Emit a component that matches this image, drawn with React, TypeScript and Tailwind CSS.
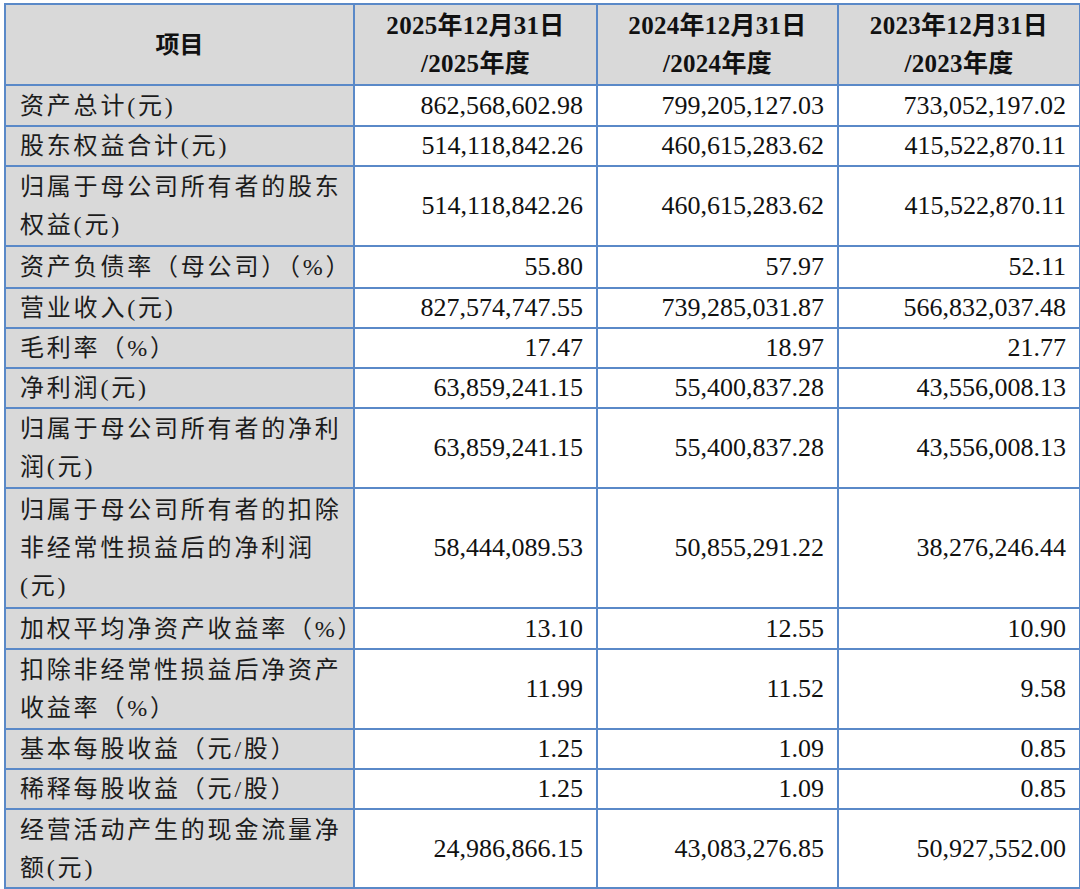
import React from 'react';

type Row = {
    label: string[];
    values: string[];
    h: string;
};

const rows: Row[] = [
    { label: ['资产总计(元)'], values: ['862,568,602.98', '799,205,127.03', '733,052,197.02'], h: 'h-[41px]' },
    { label: ['股东权益合计(元)'], values: ['514,118,842.26', '460,615,283.62', '415,522,870.11'], h: 'h-[40px]' },
    { label: ['归属于母公司所有者的股东', '权益(元)'], values: ['514,118,842.26', '460,615,283.62', '415,522,870.11'], h: 'h-[80px]' },
    { label: ['资产负债率（母公司）（%）'], values: ['55.80', '57.97', '52.11'], h: 'h-[42px]' },
    { label: ['营业收入(元)'], values: ['827,574,747.55', '739,285,031.87', '566,832,037.48'], h: 'h-[40px]' },
    { label: ['毛利率（%）'], values: ['17.47', '18.97', '21.77'], h: 'h-[40px]' },
    { label: ['净利润(元)'], values: ['63,859,241.15', '55,400,837.28', '43,556,008.13'], h: 'h-[40px]' },
    { label: ['归属于母公司所有者的净利', '润(元)'], values: ['63,859,241.15', '55,400,837.28', '43,556,008.13'], h: 'h-[80px]' },
    { label: ['归属于母公司所有者的扣除', '非经常性损益后的净利润', '(元)'], values: ['58,444,089.53', '50,855,291.22', '38,276,246.44'], h: 'h-[120px]' },
    { label: ['加权平均净资产收益率（%）'], values: ['13.10', '12.55', '10.90'], h: 'h-[41px]' },
    { label: ['扣除非经常性损益后净资产', '收益率（%）'], values: ['11.99', '11.52', '9.58'], h: 'h-[80px]' },
    { label: ['基本每股收益（元/股）'], values: ['1.25', '1.09', '0.85'], h: 'h-[40px]' },
    { label: ['稀释每股收益（元/股）'], values: ['1.25', '1.09', '0.85'], h: 'h-[40px]' },
    { label: ['经营活动产生的现金流量净', '额(元)'], values: ['24,986,866.15', '43,083,276.85', '50,927,552.00'], h: 'h-[79px]' }
];

const years = ['2025', '2024', '2023'];

export default function App() {
    return (
        <div className="w-[1080px] h-[889px] bg-white pt-[3px] pl-[4px] text-[#111] font-['Liberation_Serif','Noto_Sans_CJK_SC',serif]">
            <table className="table-fixed border-collapse w-[1075px]">
                <colgroup>
                    <col className="w-[349px]" />
                    <col className="w-[243px]" />
                    <col className="w-[241px]" />
                    <col className="w-[242px]" />
                </colgroup>
                <thead>
                    {/* HEADER ROW */}
                    <tr className="h-[81px] bg-[#d9d9d9]">
                        <th className="border-2 border-[#5a89c8] text-[24px] font-bold">项目</th>
                        {years.map((y) => (
                            <th
                                key={y}
                                className="border-2 border-[#5a89c8] text-[25px] font-bold leading-[38px] tracking-[0.3px] whitespace-nowrap"
                            >
                                {y}年12月31日
                                <br />/{y}年度
                            </th>
                        ))}
                    </tr>
                </thead>
                <tbody>
                    {rows.map((r, i) => (
                        <tr key={i} className={r.h}>
                            <td className="border-2 border-[#5a89c8] bg-[#d9d9d9] pl-[14px] text-[24px] leading-[38px] tracking-[2.8px] whitespace-nowrap text-[#1c1c1c]">
                                {r.label.map((l, j) => (
                                    <div key={j}>{l}</div>
                                ))}
                            </td>
                            {r.values.map((v, j) => (
                                <td
                                    key={j}
                                    className="border-2 border-[#5a89c8] text-right pr-[13px] text-[26px] leading-[38px]"
                                >
                                    {v}
                                </td>
                            ))}
                        </tr>
                    ))}
                </tbody>
            </table>
        </div>
    );
}
